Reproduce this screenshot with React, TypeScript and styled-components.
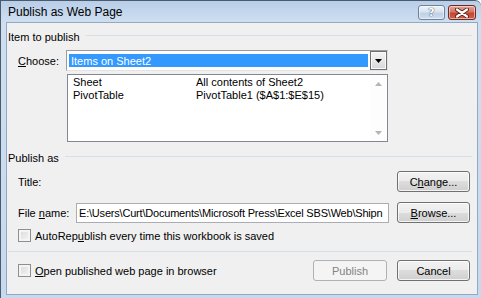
import React from 'react';
import styled, { createGlobalStyle } from 'styled-components';

const Global = createGlobalStyle`
  html, body {
    margin: 0;
    padding: 0;
    background: #ffffff;
  }
  body {
    font-family: "Liberation Sans", Arial, sans-serif;
    font-size: 11px;
    color: #000;
  }
`;

const Window = styled.div`
  box-sizing: border-box;
  width: 481px;
  height: 298px;
  display: flex;
  flex-direction: column;
  padding: 0 3px 3px 5px;
  border-left: 1px solid #4b5b6c;
  border-top: 1px solid #4b5b6c;
  border-top-right-radius: 6px;
  background: linear-gradient(#b8cee8 0px, #cfdff1 22px, #c6d9ee 100%);
  overflow: hidden;
`;

const TitleBar = styled.div`
  height: 21px;
  display: flex;
  align-items: flex-start;
  justify-content: space-between;
`;

const Caption = styled.div`
  margin: 4px 0 0 2px;
  font-size: 12px;
  line-height: 14px;
  color: #000;
`;

const CaptionButtons = styled.div`
  display: flex;
  gap: 3px;
  margin: 4px 2px 0 0;
`;

const CaptionButton = styled.div<{ danger?: boolean }>`
  box-sizing: border-box;
  width: ${p => (p.danger ? 28 : 27)}px;
  height: 15px;
  display: flex;
  align-items: center;
  justify-content: center;
  border-radius: 3px;
  border: 1px solid ${p => (p.danger ? '#6e2b22' : '#6f8298')};
  background: ${p =>
    p.danger
      ? 'linear-gradient(#e6a497 0%, #d67765 45%, #c4462f 55%, #d2614a 100%)'
      : 'linear-gradient(#eef3f9 0%, #d9e4f1 45%, #bfd1e6 55%, #cfdcec 100%)'};
  box-shadow: inset 0 0 0 1px rgba(255, 255, 255, 0.5);
  font-family: "DejaVu Sans", sans-serif;
  font-weight: bold;
  font-size: 11px;
  color: #ffffff;
  text-shadow: 0 0 1px #3e4d5e, 0 0 1px #3e4d5e;
`;

const Client = styled.div`
  flex: 1;
  display: flex;
  flex-direction: column;
  padding: 6px 5px 0 1px;
  background: #f0f0f0;
  border: 1px solid #93a9c3;
`;

const SectionHeader = styled.div<{ gapTop: number }>`
  display: flex;
  align-items: center;
  height: 16px;
  margin-top: ${p => p.gapTop}px;
  gap: 6px;
`;

const Rule = styled.div`
  flex: 1;
  height: 1px;
  margin-bottom: 4px;
  background: #d5dfe5;
`;

const Row = styled.div<{ gapTop: number; h: number }>`
  display: flex;
  align-items: center;
  height: ${p => p.h}px;
  margin-top: ${p => p.gapTop}px;
  padding-left: 10px;
`;

const Label = styled.div<{ w?: number }>`
  width: ${p => (p.w ? `${p.w}px` : 'auto')};
  flex: none;
  white-space: nowrap;
`;

const Key = styled.span`
  text-decoration: underline;
  text-underline-offset: 1px;
`;

const Combo = styled.div`
  box-sizing: border-box;
  width: 322px;
  height: 21px;
  display: flex;
  padding: 0 0 0 2px;
  background: #ffffff;
  border: 1px solid;
  border-color: #9c9c9c #e3e3e3 #e3e3e3 #9c9c9c;
`;

const Selected = styled.div`
  flex: 1;
  margin: 3px 2px 3px 0;
  padding-left: 2px;
  display: flex;
  align-items: center;
  background: #3399ff;
  color: #ffffff;
`;

const DropButton = styled.div`
  box-sizing: border-box;
  width: 17px;
  display: flex;
  align-items: center;
  justify-content: center;
  border: 1px solid #6f6f6f;
  background: linear-gradient(#f4f4f4 0%, #e8e8e8 50%, #d6d6d6 100%);
  box-shadow: inset 0 0 0 1px #fafafa;
`;

const ListBox = styled.div`
  box-sizing: border-box;
  width: 321px;
  height: 68px;
  margin: 3px 0 0 59px;
  display: flex;
  background: #ffffff;
  border: 1px solid #828790;
`;

const ListItems = styled.div`
  flex: 1;
  padding: 1px 0 0 5px;
`;

const ListRow = styled.div`
  display: grid;
  grid-template-columns: 123px 1fr;
  height: 13px;
  line-height: 13px;
  white-space: nowrap;
`;

const ScrollTrack = styled.div`
  width: 17px;
  display: flex;
  flex-direction: column;
  justify-content: space-between;
  background: #fdfdfd;
`;

const ScrollArrow = styled.div`
  height: 17px;
  display: flex;
  align-items: center;
  justify-content: center;
`;

const Spacer = styled.div`
  flex: 1;
`;

const Button = styled.div<{ w: number; disabled?: boolean; last?: boolean }>`
  box-sizing: border-box;
  width: ${p => p.w}px;
  height: 21px;
  flex: none;
  margin-right: ${p => (p.last ? 2 : 0)}px;
  display: flex;
  align-items: center;
  justify-content: center;
  border-radius: 3px;
  border: 1px solid ${p => (p.disabled ? '#adb2b5' : '#707070')};
  background: ${p =>
    p.disabled
      ? '#f4f4f4'
      : 'linear-gradient(#f2f2f2 0%, #ebebeb 50%, #dddddd 50%, #cfcfcf 100%)'};
  box-shadow: inset 0 0 0 1px ${p => (p.disabled ? '#f4f4f4' : 'rgba(255,255,255,0.75)')};
  color: ${p => (p.disabled ? '#838383' : '#000')};
`;

const TextBox = styled.div`
  box-sizing: border-box;
  width: 313px;
  height: 20px;
  flex: none;
  padding: 0 2px;
  display: flex;
  align-items: center;
  background: #ffffff;
  border: 1px solid #abadb3;
  overflow: hidden;
  white-space: nowrap;
  letter-spacing: -0.2px;
`;

const Check = styled.div`
  box-sizing: border-box;
  width: 13px;
  height: 13px;
  flex: none;
  border: 1px solid #8e8f8f;
  background: linear-gradient(135deg, #d9d9d9 0%, #f6f6f6 100%);
  box-shadow: inset 0 0 0 2px #f4f4f4;
`;

const CheckField = styled.div`
  display: flex;
  align-items: center;
`;

const CheckLabel = styled.div`
  margin-left: 4px;
  white-space: nowrap;
`;

const Separator = styled.div`
  height: 1px;
  margin-top: 9px;
  background: #d5dfe5;
`;

const BottomRow = styled.div`
  display: flex;
  align-items: center;
  height: 21px;
  margin-top: 8px;
  padding-left: 10px;
  gap: 10px;
`;

const Triangle = ({ up, color }: { up?: boolean; color: string }) => (
  <svg width="7" height="4" viewBox="0 0 7 4">
    <path d={up ? 'M0 4 L3.5 0 L7 4 Z' : 'M0 0 L7 0 L3.5 4 Z'} fill={color} />
  </svg>
);

const CloseGlyph = () => (
  <svg width="14" height="10" viewBox="0 0 14 10">
    <path d="M2 1.5 L12 8.5 M12 1.5 L2 8.5" stroke="#5b1e16" strokeWidth="4" strokeLinecap="round" />
    <path d="M2 1.5 L12 8.5 M12 1.5 L2 8.5" stroke="#ffffff" strokeWidth="2.2" strokeLinecap="round" />
  </svg>
);

const App: React.FC = () => (
  <>
    <Global />
    <Window>
      <TitleBar>
        <Caption>Publish as Web Page</Caption>
        <CaptionButtons>
          <CaptionButton>?</CaptionButton>
          <CaptionButton danger>
            <CloseGlyph />
          </CaptionButton>
        </CaptionButtons>
      </TitleBar>
      <Client>
        <SectionHeader gapTop={0}>
          <span>Item to publish</span>
          <Rule />
        </SectionHeader>

        <Row gapTop={5} h={21}>
          <Label w={48}>
            <Key>C</Key>hoose:
          </Label>
          <Combo>
            <Selected>Items on Sheet2</Selected>
            <DropButton>
              <Triangle color="#000" />
            </DropButton>
          </Combo>
        </Row>

        <ListBox>
          <ListItems>
            <ListRow>
              <span>Sheet</span>
              <span>All contents of Sheet2</span>
            </ListRow>
            <ListRow>
              <span>PivotTable</span>
              <span>PivotTable1 ($A$1:$E$15)</span>
            </ListRow>
          </ListItems>
          <ScrollTrack>
            <ScrollArrow>
              <Triangle up color="#b4b4b4" />
            </ScrollArrow>
            <ScrollArrow>
              <Triangle color="#b4b4b4" />
            </ScrollArrow>
          </ScrollTrack>
        </ListBox>

        <SectionHeader gapTop={8}>
          <span>Publish as</span>
          <Rule />
        </SectionHeader>

        <Row gapTop={5} h={21}>
          <Label>Title:</Label>
          <Spacer />
          <Button w={73} last>
            C<Key>h</Key>ange...
          </Button>
        </Row>

        <Row gapTop={10} h={21}>
          <Label w={58}>
            File <Key>n</Key>ame:
          </Label>
          <TextBox>E:\Users\Curt\Documents\Microsoft Press\Excel SBS\Web\Shipn</TextBox>
          <Spacer />
          <Button w={73} last>
            <Key>B</Key>rowse...
          </Button>
        </Row>

        <Row gapTop={6} h={13}>
          <Check />
          <CheckLabel>
            AutoRep<Key>u</Key>blish every time this workbook is saved
          </CheckLabel>
        </Row>

        <Separator />

        <BottomRow>
          <CheckField>
            <Check />
            <CheckLabel>
              <Key>O</Key>pen published web page in browser
            </CheckLabel>
          </CheckField>
          <Spacer />
          <Button w={74} disabled>
            Publish
          </Button>
          <Button w={73} last>
            Cancel
          </Button>
        </BottomRow>
      </Client>
    </Window>
  </>
);

export default App;
